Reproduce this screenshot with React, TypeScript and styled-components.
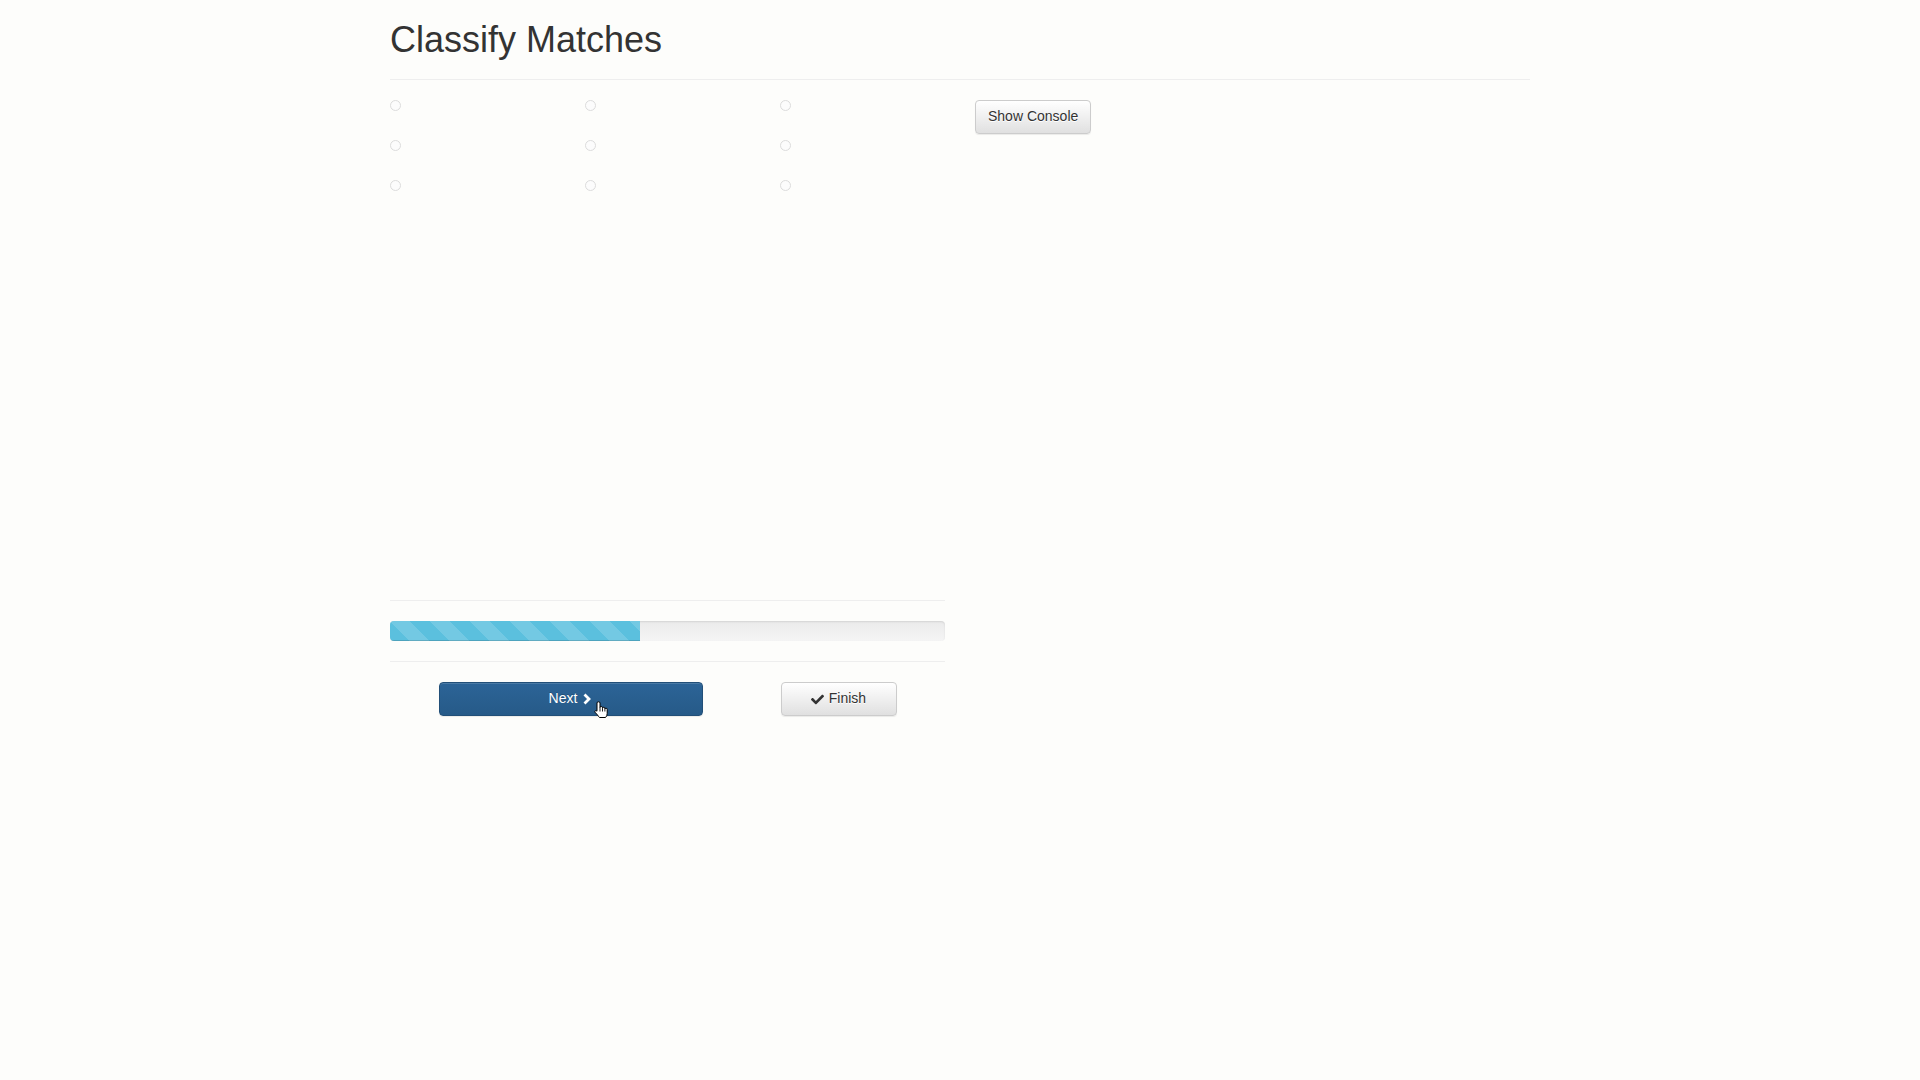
import React from "react";
import styled, { createGlobalStyle } from "styled-components";
import { FaCheck } from "react-icons/fa";

const GlobalStyle = createGlobalStyle`
  html, body {
    margin: 0;
    padding: 0;
    background: #fdfdfb;
  }
  body {
    font-family: "Liberation Sans", Arial, Helvetica, sans-serif;
    font-size: 14px;
    line-height: 1.428571;
    color: #333;
  }
  * { box-sizing: border-box; }
`;

const Container = styled.div`
  width: 1170px;
  margin: 0 auto;
  padding: 0 15px;
  min-height: 1080px;
`;

const Title = styled.h1`
  margin: 20px 0 10px;
  font-size: 36px;
  font-weight: 500;
  line-height: 39px;
  color: #333;
`;

const Rule = styled.hr`
  margin: 20px 0;
  border: 0;
  border-top: 1px solid #eee;
  height: 0;
`;

const Row = styled.div`
  display: flex;
  gap: 30px;
`;

const Column = styled.div`
  width: 555px;
  flex: none;
`;

const Stage = styled.div`
  min-height: 480px;
`;

const RadioGrid = styled.div`
  display: grid;
  grid-template-columns: 195px 195px 1fr;
  row-gap: 29px;
`;

const Radio = styled.input.attrs({ type: "radio" })`
  appearance: none;
  -webkit-appearance: none;
  margin: 0;
  width: 11px;
  height: 11px;
  border-radius: 50%;
  border: 1px solid #dcdcdc;
  background: #fcfcfc;
  display: block;
`;

const Progress = styled.div`
  height: 20px;
  margin-bottom: 20px;
  overflow: hidden;
  border-radius: 4px;
  background: linear-gradient(to bottom, #ebebeb 0, #f5f5f5 100%);
  box-shadow: inset 0 1px 2px rgba(0, 0, 0, 0.1);
`;

const ProgressFill = styled.div`
  height: 100%;
  background-color: #5bc0de;
  background-image: linear-gradient(
    45deg,
    rgba(255, 255, 255, 0.15) 25%,
    transparent 25%,
    transparent 50%,
    rgba(255, 255, 255, 0.15) 50%,
    rgba(255, 255, 255, 0.15) 75%,
    transparent 75%,
    transparent
  );
  background-size: 40px 40px;
  box-shadow: inset 0 -1px 0 rgba(0, 0, 0, 0.15);
`;

const ButtonBar = styled.div`
  display: flex;
  justify-content: center;
  gap: 78px;
`;

const BaseButton = styled.button<{ $w?: number }>`
  position: relative;
  display: inline-flex;
  align-items: center;
  justify-content: center;
  gap: 5px;
  height: 34px;
  width: ${(p) => (p.$w ? `${p.$w}px` : "auto")};
  padding: 6px 12px;
  font-family: "Liberation Sans", Arial, Helvetica, sans-serif;
  font-size: 14px;
  line-height: 1.428571;
  border-radius: 4px;
  cursor: pointer;
`;

const PrimaryButton = styled(BaseButton)`
  color: #fff;
  background: linear-gradient(to bottom, #2c6497 0, #265a88 100%);
  border: 1px solid #224f78;
  text-shadow: 0 -1px 0 rgba(0, 0, 0, 0.2);
  box-shadow: inset 0 1px 0 rgba(255, 255, 255, 0.15), 0 1px 1px rgba(0, 0, 0, 0.075);
`;

const DefaultButton = styled(BaseButton)`
  color: #333;
  background: linear-gradient(to bottom, #fff 0, #e0e0e0 100%);
  border: 1px solid #ccc;
  text-shadow: 0 1px 0 #fff;
  box-shadow: inset 0 1px 0 rgba(255, 255, 255, 0.15), 0 1px 1px rgba(0, 0, 0, 0.075);
`;

const Chevron = styled.svg`
  display: block;
`;

const ChevronIcon = () => (
  <Chevron width="10" height="12" viewBox="0 0 10 12">
    <path d="M2.5 1.5 L7 6 L2.5 10.5" fill="none" stroke="#fff" strokeWidth="2.8" strokeLinejoin="miter" />
  </Chevron>
);

const Cursor = styled.svg`
  position: absolute;
  left: 154px;
  top: 18px;
  pointer-events: none;
`;

const HandCursor = () => (
  <Cursor width="15" height="18" viewBox="0 0 15 18">
    <path
      d="M3 9.5 V2 Q3 0.8 4.5 0.8 Q6 0.8 6 2 V6.5 Q6 5.5 7.25 5.5 Q8.5 5.5 8.5 6.7 V7.2 Q8.5 6.3 9.7 6.3 Q10.9 6.3 10.9 7.5 V8 Q10.9 7.2 12 7.2 Q13.2 7.2 13.2 8.4 V12.5 Q13.2 15 11.5 16.5 H5.5 Q4.5 15.5 3.5 14 L1 11.2 Q0.5 10.2 1.4 9.7 Q2.2 9.3 3 10.2 Z"
      fill="#fff"
      stroke="#000"
      strokeWidth="1"
      strokeLinejoin="round"
    />
    <path d="M6 6.5 V10.5 M8.5 7.2 V10.5 M10.9 8 V10.5" stroke="#000" strokeWidth="0.9" fill="none" />
  </Cursor>
);

export default function App() {
  const radios = Array.from({ length: 9 }, (_, i) => i);
  return (
    <>
      <GlobalStyle />
      <Container>
        <Title>Classify Matches</Title>
        <Rule />
        <Row>
          <Column>
            <Stage>
              <RadioGrid>
                {radios.map((i) => (
                  <Radio key={i} name={`match-${Math.floor(i / 3)}`} />
                ))}
              </RadioGrid>
            </Stage>
            <Rule />
            <Progress>
              <ProgressFill style={{ width: "45%" }} />
            </Progress>
            <Rule />
            <ButtonBar>
              <PrimaryButton $w={264}>
                Next <ChevronIcon />
                <HandCursor />
              </PrimaryButton>
              <DefaultButton $w={116}>
                <FaCheck size={13} /> Finish
              </DefaultButton>
            </ButtonBar>
          </Column>
          <Column>
            <DefaultButton>Show Console</DefaultButton>
          </Column>
        </Row>
      </Container>
    </>
  );
}
